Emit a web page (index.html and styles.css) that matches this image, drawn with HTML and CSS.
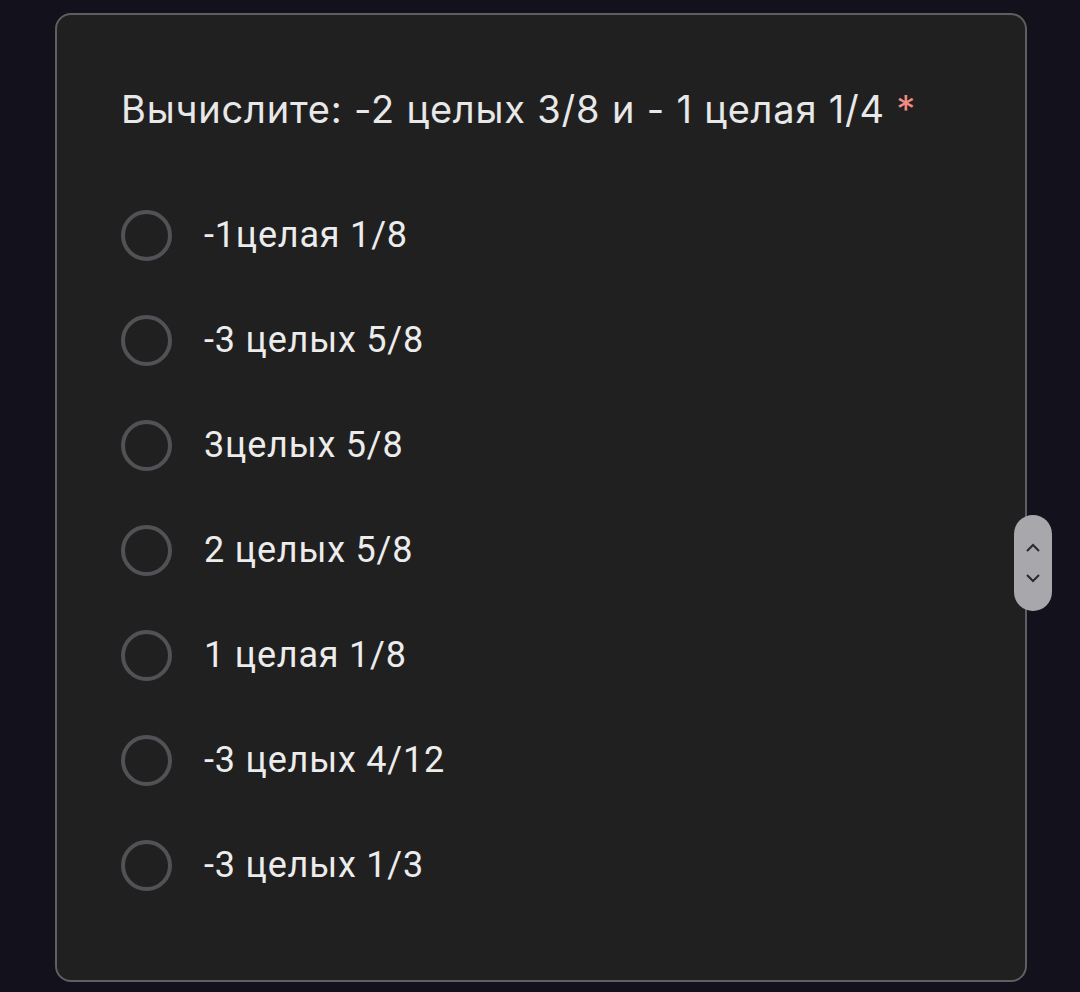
FILE: index.html
```html
<!DOCTYPE html>
<html lang="ru">

<head>
    <meta charset="UTF-8">
    <meta name="viewport" content="width=device-width, initial-scale=1.0">
    <title>Вопрос</title>
    <link rel="stylesheet" href="styles.css">
</head>

<body>
    <div class="question-card">
        <h1 class="question-title">Вычислите: -2 целых 3/8 и - 1 целая 1/4 <span class="required">*</span></h1>

        <div class="options">
            <label class="option"><span class="radio"></span><span class="option-text">-1целая 1/8</span></label>
            <label class="option"><span class="radio"></span><span class="option-text">-3 целых 5/8</span></label>
            <label class="option"><span class="radio"></span><span class="option-text">3целых 5/8</span></label>
            <label class="option"><span class="radio"></span><span class="option-text">2 целых 5/8</span></label>
            <label class="option"><span class="radio"></span><span class="option-text">1 целая 1/8</span></label>
            <label class="option"><span class="radio"></span><span class="option-text">-3 целых 4/12</span></label>
            <label class="option"><span class="radio"></span><span class="option-text">-3 целых 1/3</span></label>
        </div>
    </div>

    <!-- floating scroll handle -->
    <div class="scroll-handle">
        <svg width="16" height="10" viewBox="0 0 16 10"><path d="M2 8 L8 2 L14 8" fill="none" stroke="#2a2a2e" stroke-width="2"/></svg>
        <svg width="16" height="10" viewBox="0 0 16 10"><path d="M2 2 L8 8 L14 2" fill="none" stroke="#2a2a2e" stroke-width="2"/></svg>
    </div>
</body>

</html>
```

FILE: styles.css
```css
body {
    margin: 0;
    padding-top: 13px;
    background-color: #13111b;
    font-family: Roboto, "Liberation Sans", sans-serif;
    color: #e8e8e8;
    height: 992px;
    box-sizing: border-box;
    overflow: hidden;
}

.question-card {
    margin-left: 55px;
    width: 972px;
    height: 969px;
    box-sizing: border-box;
    background-color: #202020;
    border: 2px solid #5f5e63;
    border-radius: 16px;
    padding: 70px 64px 0 64px;
}

.question-title {
    margin: 0;
    font-family: Inter, Roboto, sans-serif;
    font-weight: 400;
    font-size: 38px;
    line-height: 48px;
    color: #e8e8e8;
    letter-spacing: 0.8px;
}

.required {
    color: #f28b82;
}

.options {
    display: flex;
    flex-direction: column;
    gap: 53px;
    margin-top: 76px;
}

.option {
    display: flex;
    align-items: center;
    height: 52px;
}

.radio {
    width: 43px;
    height: 43px;
    border: 4px solid #505256;
    border-radius: 50%;
    flex-shrink: 0;
    margin-right: 32px;
}

.option-text {
    font-size: 36px;
    letter-spacing: 0.8px;
    color: #ececec;
}

.scroll-handle {
    position: absolute;
    left: 1014px;
    top: 515px;
    width: 38px;
    height: 96px;
    border-radius: 19px;
    background-color: #a8a7ac;
    display: flex;
    flex-direction: column;
    align-items: center;
    justify-content: center;
    gap: 20px;
}
```
